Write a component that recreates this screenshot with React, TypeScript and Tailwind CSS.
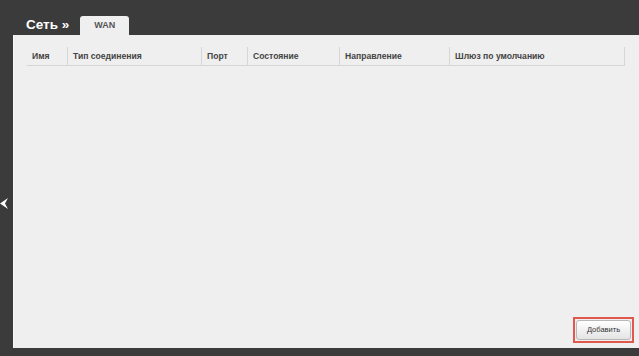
const columns = [
  { label: "Имя", w: "w-[40px]" },
  { label: "Тип соединения", w: "w-[134px]" },
  { label: "Порт", w: "w-[46px]" },
  { label: "Состояние", w: "w-[92px]" },
  { label: "Направление", w: "w-[110px]" },
  { label: "Шлюз по умолчанию", w: "w-[176px]" },
];

export default function App() {
  return (
    <div
      className="relative w-[639px] h-[356px] bg-[#3b3b3b] flex flex-col overflow-hidden"
      style={{ fontFamily: '"Liberation Sans", Arial, sans-serif' }}
    >
      {/* top: section title + tab */}
      <div className="flex items-end h-[35px]">
        <div className="pl-[26px] pb-[4px] text-[13.5px] font-bold text-white leading-none">
          Сеть »
        </div>
        <div className="ml-[11px] w-[49px] h-[19px] bg-[#efefef] rounded-t-[3px] flex items-center justify-center text-[9px] font-bold text-[#555]">
          WAN
        </div>
      </div>

      {/* left nav arrow */}
      <svg
        className="absolute left-0 top-[198px]"
        width="8"
        height="11"
        viewBox="0 0 8 11"
      >
        <path d="M0 5.5 L8 0 L5 5.5 L8 11 Z" fill="#fff" />
      </svg>

      {/* main panel */}
      <div className="ml-[13px] h-[313px] bg-[#efefef] flex flex-col border-l border-[#f8f8f8]">
        <div className="mt-[12px] ml-[13px] flex h-[19px] border-b border-[#d6d6d6] w-[598px]">
          {columns.map((c, i) => (
            <div
              key={c.label}
              className={`${c.w} h-full flex items-center pl-[5px] text-[8.6px] font-bold text-[#444] ${
                i > 0 ? "border-l border-[#d6d6d6]" : ""
              } ${i === columns.length - 1 ? "border-r border-[#d6d6d6]" : ""}`}
            >
              {c.label}
            </div>
          ))}
        </div>

        <div className="flex-1" />

        <div className="flex justify-end pr-[5px] pb-[5px]">
          <div className="border-2 border-[#e2574c] p-[1px]">
            <button className="block w-[55px] h-[20px] rounded-[3px] border border-[#b8b8b8] bg-gradient-to-b from-white to-[#e4e4e4] text-[7.5px] leading-none text-[#333]">
              Добавить
            </button>
          </div>
        </div>
      </div>
    </div>
  );
}
